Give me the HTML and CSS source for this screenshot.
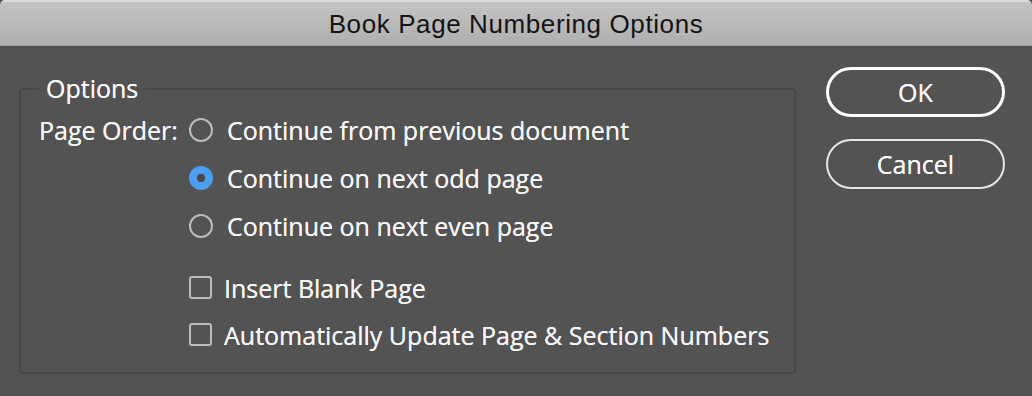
FILE: index.html
```html
<!DOCTYPE html>
<html>
<head>
  <meta charset="utf-8">
  <title>Book Page Numbering Options</title>
  <link rel="stylesheet" href="styles.css">
</head>
<body>
<div class="dialog">
  <div class="titlebar">Book Page Numbering Options</div>
  <div class="body">
    <fieldset class="group">
      <legend>Options</legend>
      <div class="grid">
        <span class="label">Page Order:</span>
        <label class="opt"><span class="radio"></span>Continue from previous document</label>
        <label class="opt"><span class="radio on"></span>Continue on next odd page</label>
        <label class="opt"><span class="radio"></span>Continue on next even page</label>
        <label class="opt check first"><span class="box"></span>Insert Blank Page</label>
        <label class="opt check"><span class="box"></span>Automatically Update Page &amp; Section Numbers</label>
      </div>
    </fieldset>
    <div class="buttons">
      <button class="btn default">OK</button>
      <button class="btn">Cancel</button>
    </div>
  </div>
</div>
</body>
</html>
```
FILE: styles.css
```css
html, body { margin: 0; padding: 0; }
body { width: 1032px; height: 396px; background: #535353; overflow: hidden; font-family: "Open Sans", "Noto Sans", sans-serif; color: #f4f4f4; }
.dialog { height: 396px; background: #535353; border-radius: 5px 5px 0 0; overflow: hidden; }
.titlebar { height: 43px; line-height: 45px; text-align: center; color: #141414; font-family: "Liberation Sans", Arial, sans-serif; font-size: 26px; letter-spacing: 0.6px;
  background: linear-gradient(#c4c3c4, #b0afb0); border-top: 2px solid #d9d9d9; border-bottom: 1px solid #9c9b9c; }
.body { display: flex; align-items: flex-start; padding: 21px 0 0 19px; }
.group { box-sizing: border-box; margin: 8px 0 0 0; width: 777px; padding: 5px 19px 15px 19px; border: 1px solid #434343; border-radius: 4px; box-shadow: inset 0 0 0 1px #4c4c4c; }
.group legend { font-size: 25px; line-height: 26px; padding: 0 7px; margin-left: 0; color: #f6f6f6; text-shadow: 0 0 0.4px #fff; }
.grid { display: grid; grid-template-columns: 150px auto; text-shadow: 0 0 0.4px #fff; }
.label { font-size: 25px; line-height: 48px; }
.opt { grid-column: 2; display: flex; align-items: center; height: 48px; font-size: 25px; }
.opt.first { margin-top: 14px; height: 47px; }
.check { height: 47px; }
.radio { width: 20px; height: 20px; border: 2px solid #bcbcbc; border-radius: 50%; margin-right: 14px; box-sizing: content-box; }
.radio.on { border-color: #4b9ff2; background: radial-gradient(circle, #4a4a4a 0 4px, #4b9ff2 4.5px); }
.box { width: 19px; height: 19px; border: 2px solid #bcbcbc; border-radius: 3px; margin-right: 12px; }
.buttons { display: flex; flex-direction: column; gap: 22px; margin-left: 30px; }
.btn { width: 179px; height: 50px; border-radius: 25px; background: transparent; color: #f8f8f8; font-family: "Open Sans", "Noto Sans", sans-serif; font-size: 25px; border: 2px solid #e6e6e6; padding: 0; text-shadow: 0 0 0.4px #fff; }
.btn.default { border: 3px solid #ffffff; }
```
